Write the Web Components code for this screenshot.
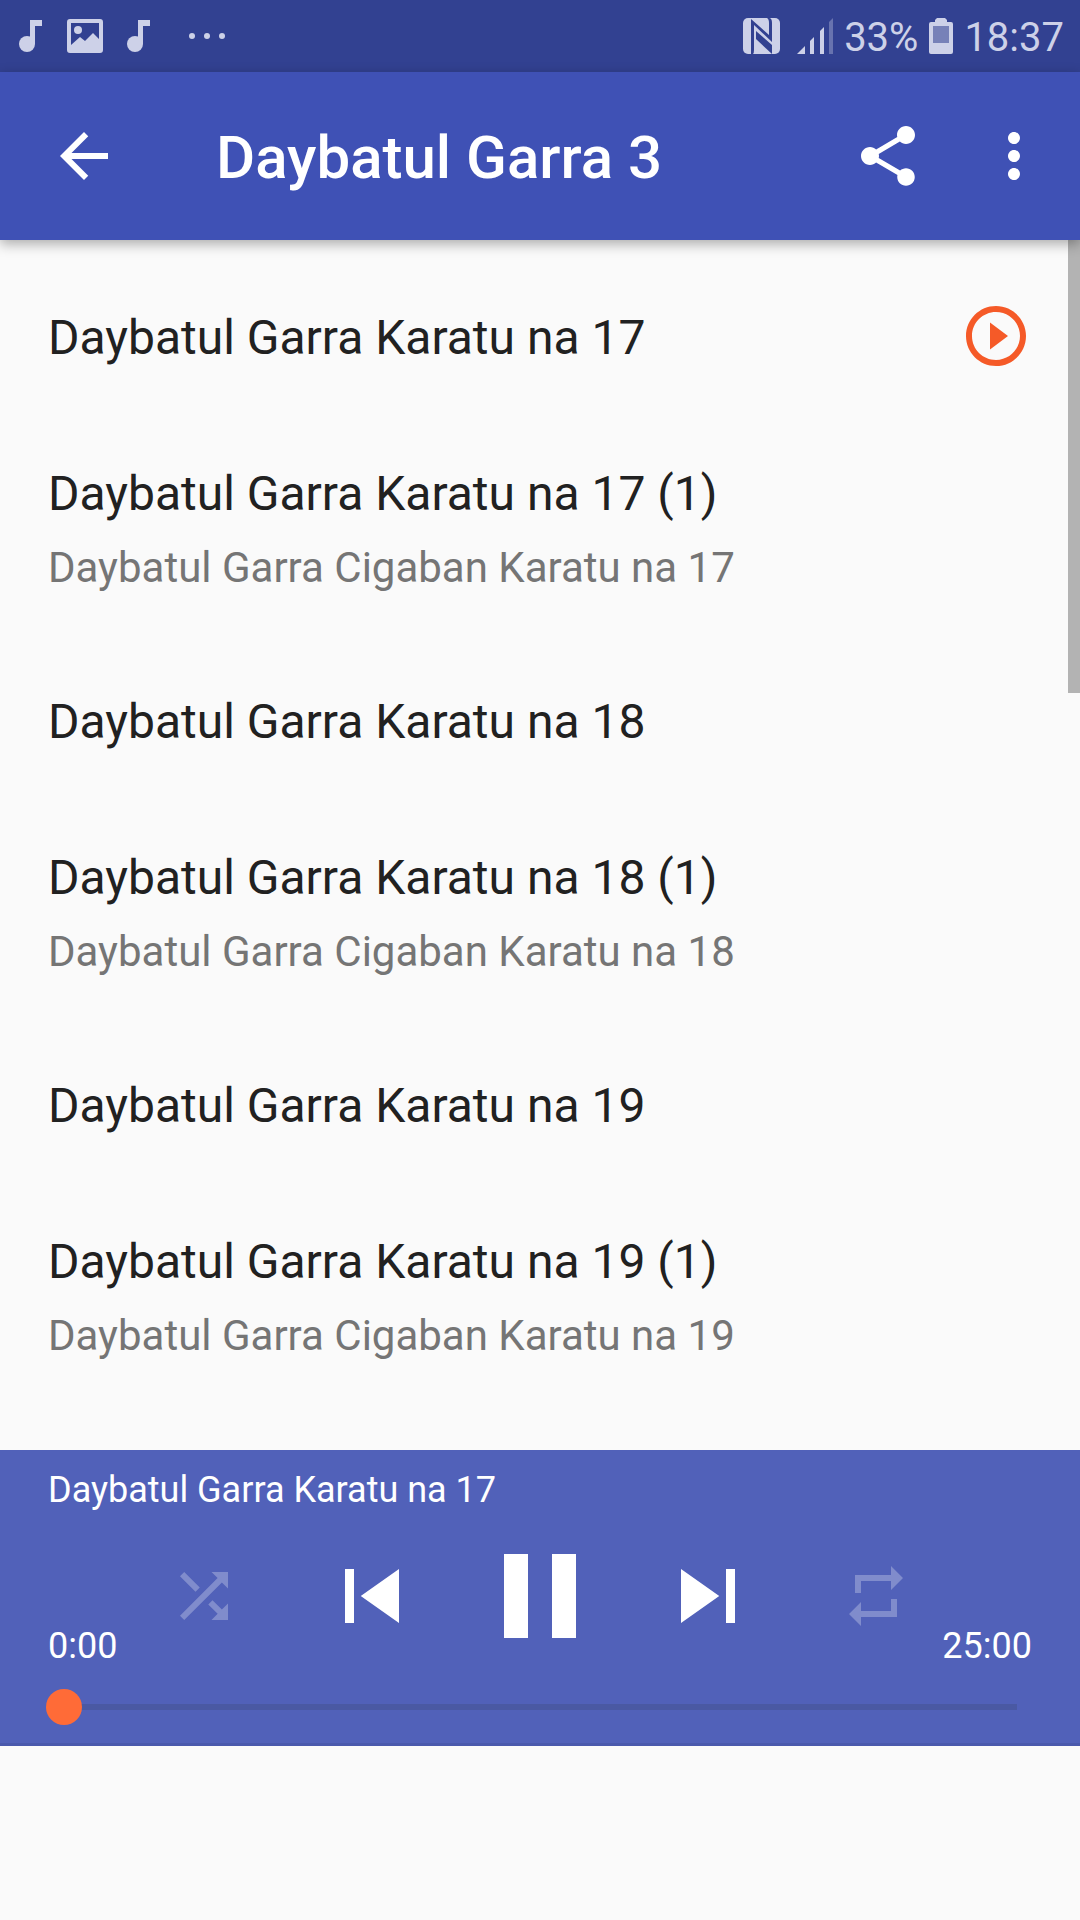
<!DOCTYPE html>
<html lang="ha">
<head>
<meta charset="utf-8">
<meta name="viewport" content="width=device-width, initial-scale=1">
<title>Daybatul Garra 3</title>
<style>
  html, body { height: 100%; }
  body {
    margin: 0;
    background: #fafafa;
    font-family: Roboto, "Liberation Sans", sans-serif;
  }
</style>
</head>
<body>
<audio-app>
  <status-bar slot="status" battery="33%" time="18:37"></status-bar>
  <app-bar slot="header">Daybatul Garra 3</app-bar>
  <track-list>
    <track-item playing>Daybatul Garra Karatu na 17</track-item>
    <track-item>Daybatul Garra Karatu na 17 (1)<span slot="sub">Daybatul Garra Cigaban Karatu na 17</span></track-item>
    <track-item>Daybatul Garra Karatu na 18</track-item>
    <track-item>Daybatul Garra Karatu na 18 (1)<span slot="sub">Daybatul Garra Cigaban Karatu na 18</span></track-item>
    <track-item>Daybatul Garra Karatu na 19</track-item>
    <track-item>Daybatul Garra Karatu na 19 (1)<span slot="sub">Daybatul Garra Cigaban Karatu na 19</span></track-item>
  </track-list>
  <audio-player slot="player" elapsed="0:00" duration="25:00">Daybatul Garra Karatu na 17</audio-player>
</audio-app>

<script>
// Icons on a 24 unit grid
const ICONS = {
  back: 'M20 11H7.83l5.59-5.59L12 4l-8 8 8 8 1.41-1.41L7.83 13H20v-2z',
  share: 'M18 16.08c-.76 0-1.44.3-1.96.77L8.91 12.7c.05-.23.09-.46.09-.7s-.04-.47-.09-.7l7.05-4.11c.54.5 1.25.81 2.04.81 1.66 0 3-1.34 3-3s-1.34-3-3-3-3 1.34-3 3c0 .24.04.47.09.7L8.04 9.81C7.5 9.31 6.79 9 6 9c-1.66 0-3 1.34-3 3s1.34 3 3 3c.79 0 1.5-.31 2.04-.81l7.12 4.16c-.05.21-.08.43-.08.65 0 1.61 1.31 2.92 2.92 2.92s2.92-1.31 2.92-2.92-1.31-2.92-2.92-2.92z',
  more: 'M12 8c1.1 0 2-.9 2-2s-.9-2-2-2-2 .9-2 2 .9 2 2 2zm0 2c-1.1 0-2 .9-2 2s.9 2 2 2 2-.9 2-2-.9-2-2-2zm0 6c-1.1 0-2 .9-2 2s.9 2 2 2 2-.9 2-2-.9-2-2-2z',
  playing: 'M10 16.5l6-4.5-6-4.5v9zM12 2C6.48 2 2 6.48 2 12s4.48 10 10 10 10-4.48 10-10S17.52 2 12 2zm0 18c-4.41 0-8-3.59-8-8s3.59-8 8-8 8 3.59 8 8-3.59 8-8 8z',
  shuffle: 'M10.59 9.17L5.41 4 4 5.41l5.17 5.17 1.42-1.41zM14.5 4l2.04 2.04L4 18.59 5.41 20 17.96 7.46 20 9.5V4h-5.5zm.33 9.41l-1.41 1.41 3.13 3.13L14.5 20H20v-5.5l-2.04 2.04-3.13-3.13z',
  prev: 'M6 6h2v12H6zm3.5 6l8.5 6V6z',
  pause: 'M6 19h4V5H6v14zm8-14v14h4V5h-4z',
  next: 'M6 18l8.5-6L6 6v12zM16 6v12h2V6h-2z',
  repeat: 'M7 7h10v3l4-4-4-4v3H5v6h2V7zm10 10H7v-3l-4 4 4 4v-3h12v-6h-2v4z',
};

const icon = name => `<svg viewBox="0 0 24 24" aria-hidden="true"><path fill="currentColor" d="${ICONS[name]}"/></svg>`;

const BUTTON_CSS = `
  button {
    display: block;
    padding: 0;
    border: 0;
    background: none;
    color: inherit;
    font: inherit;
    cursor: pointer;
  }
  svg { display: block; width: 100%; height: 100%; }
`;

class AudioApp extends HTMLElement {
  constructor() {
    super();
    this.attachShadow({ mode: 'open' }).innerHTML = `
      <style>
        :host {
          display: flex;
          flex-direction: column;
          height: 100%;
        }
        main {
          flex: 1;
          min-height: 0;
          display: flex;
        }
        /* room kept free for a banner */
        .banner { height: 174px; }
      </style>
      <slot name="status"></slot>
      <slot name="header"></slot>
      <main><slot></slot></main>
      <slot name="player"></slot>
      <div class="banner"></div>
    `;
  }
}

class StatusBar extends HTMLElement {
  constructor() {
    super();
    const note = `
      <svg width="24" height="32" viewBox="0 0 24 32" fill="currentColor" aria-hidden="true">
        <circle cx="8" cy="24" r="8"/><path d="M11 0h12v6h-7v18h-5z"/>
      </svg>`;
    this.attachShadow({ mode: 'open' }).innerHTML = `
      <style>
        :host {
          display: flex;
          align-items: center;
          justify-content: space-between;
          height: 72px;
          padding: 0 16px 0 19px;
          background: #324191;
          color: #cdd1e8;
          font-size: 40px;
          line-height: 48px;
        }
        div { display: flex; align-items: center; }
        .left { gap: 24px; }
        .right { gap: 11px; }
        .dots { margin-left: 14px; }
        .signal { margin-left: 6px; }
        span { padding-top: 3px; }
        svg { display: block; }
      </style>
      <div class="left">
        ${note}
        <svg width="36" height="34" viewBox="0 0 36 34" fill="currentColor" aria-hidden="true">
          <path fill-rule="evenodd" d="M3 0h30a3 3 0 0 1 3 3v28a3 3 0 0 1-3 3H3a3 3 0 0 1-3-3V3a3 3 0 0 1 3-3zM4 4v22l9-8 5 4 8-8 6 6V4z"/>
          <circle cx="11" cy="11" r="4"/>
        </svg>
        ${note}
        <svg class="dots" width="36" height="6" viewBox="0 0 36 6" fill="currentColor" aria-hidden="true">
          <circle cx="3" cy="3" r="3"/><circle cx="18" cy="3" r="3"/><circle cx="33" cy="3" r="3"/>
        </svg>
      </div>
      <div class="right">
        <svg width="37" height="36" viewBox="0 0 37 36" role="img" aria-label="NFC">
          <rect width="37" height="36" rx="5" fill="currentColor"/>
          <g fill="#324191">
            <path d="M8 1l18 16V5q0-4-2-5h2q3 0 3 5v19L11 7v25q0 3-1 4H8z"/>
            <path d="M13 13l16 14v9L13 21z"/>
          </g>
        </svg>
        <svg class="signal" width="36" height="36" viewBox="0 0 36 36" fill="currentColor" aria-hidden="true">
          <path d="M0 36l8-8v8zM13 23l4-4v17h-4zM23 13l4-4v27h-4z"/>
          <path opacity=".35" d="M32 4l4-4v36h-4z"/>
        </svg>
        <span id="battery"></span>
        <svg width="24" height="36" viewBox="0 0 24 36" fill="currentColor" aria-hidden="true">
          <path fill-rule="evenodd" d="M8 0h8l2 2v2h4a2 2 0 0 1 2 2v28a2 2 0 0 1-2 2H2a2 2 0 0 1-2-2V6a2 2 0 0 1 2-2h4V2zM4 8v17h16V8z"/>
          <path opacity=".45" d="M4 8h16v17H4z"/>
        </svg>
        <span id="time"></span>
      </div>
    `;
  }

  connectedCallback() {
    this.shadowRoot.getElementById('battery').textContent = this.getAttribute('battery');
    this.shadowRoot.getElementById('time').textContent = this.getAttribute('time');
  }
}

class AppBar extends HTMLElement {
  constructor() {
    super();
    this.attachShadow({ mode: 'open' }).innerHTML = `
      <style>
        ${BUTTON_CSS}
        :host {
          display: block;
          position: relative;
          z-index: 1;
          background: #3f51b5;
          color: #fff;
          box-shadow: 0 4px 12px rgba(0, 0, 0, 0.32);
        }
        header {
          display: flex;
          align-items: center;
          height: 168px;
          padding: 0 30px 0 48px;
        }
        button { width: 72px; height: 72px; }
        h1 {
          flex: 1;
          margin: 0 0 0 96px;
          padding-top: 4px;
          font-size: 60px;
          font-weight: 500;
          line-height: 70px;
        }
        .actions { display: flex; gap: 54px; }
      </style>
      <header>
        <button aria-label="Back">${icon('back')}</button>
        <h1><slot></slot></h1>
        <div class="actions">
          <button aria-label="Share">${icon('share')}</button>
          <button aria-label="More options">${icon('more')}</button>
        </div>
      </header>
    `;
  }
}

class TrackList extends HTMLElement {
  constructor() {
    super();
    this.attachShadow({ mode: 'open' }).innerHTML = `
      <style>
        :host {
          display: block;
          position: relative;
          flex: 1;
          overflow: hidden;
        }
        .list { padding-top: 20px; }
        .thumb {
          position: absolute;
          top: 0;
          right: 0;
          width: 12px;
          height: 453px;
          background: #b3b3b3;
        }
      </style>
      <div class="list" role="list"><slot></slot></div>
      <div class="thumb"></div>
    `;
  }
}

class TrackItem extends HTMLElement {
  constructor() {
    super();
    this.attachShadow({ mode: 'open' }).innerHTML = `
      <style>
        ${BUTTON_CSS}
        :host { display: block; }
        button {
          display: flex;
          align-items: center;
          justify-content: space-between;
          width: 100%;
          padding: 48px;
          text-align: left;
        }
        .title {
          display: block;
          color: #212121;
          font-size: 48px;
          line-height: 60px;
        }
        ::slotted([slot="sub"]) {
          display: block;
          margin-top: 16px;
          color: #757575;
          font-size: 42px;
          line-height: 56px;
        }
        /* icon is taller than the line, so it must not grow the row */
        .playing {
          display: none;
          width: 72px;
          height: 72px;
          margin: -10px 0 -6px;
          color: #f55a28;
        }
        :host([playing]) .playing { display: block; }
      </style>
      <button>
        <span>
          <span class="title"><slot></slot></span>
          <slot name="sub"></slot>
        </span>
        <span class="playing">${icon('playing')}</span>
      </button>
    `;
  }

  connectedCallback() {
    this.setAttribute('role', 'listitem');
  }
}

class AudioPlayer extends HTMLElement {
  constructor() {
    super();
    this.attachShadow({ mode: 'open' }).innerHTML = `
      <style>
        ${BUTTON_CSS}
        :host {
          display: block;
          padding: 19px 0 18px;
          border-bottom: 3px solid #4a59ac;
          background: #5161b9;
          color: #fff;
          font-size: 36px;
          line-height: 42px;
        }
        .name { padding: 0 48px; }
        /* times and buttons share one cell, the times sit at its bottom corners */
        .deck { display: grid; margin-top: 13px; }
        .times, .controls { grid-area: 1 / 1; }
        .times {
          display: flex;
          align-items: flex-end;
          justify-content: space-between;
          padding: 0 48px 1px;
        }
        .controls {
          display: grid;
          grid-template-columns: repeat(5, 1fr);
          place-items: center;
          margin: 0 120px;
        }
        .small { width: 72px; height: 72px; opacity: 0.27; }
        .medium { width: 108px; height: 108px; }
        .large { width: 144px; height: 144px; }

        label { display: block; margin-top: 21px; padding: 0 45px 0 46px; }
        input {
          display: block;
          width: 100%;
          height: 36px;
          margin: 0;
          appearance: none;
          -webkit-appearance: none;
          background: linear-gradient(#4a59a3, #4a59a3) center / calc(100% - 36px) 6px no-repeat;
        }
        input::-webkit-slider-thumb {
          -webkit-appearance: none;
          width: 36px;
          height: 36px;
          border-radius: 50%;
          background: #ff6b37;
        }
      </style>
      <div class="name"><slot></slot></div>
      <div class="deck">
        <div class="times">
          <span id="elapsed"></span>
          <span id="duration"></span>
        </div>
        <div class="controls">
          <button class="small" aria-label="Shuffle">${icon('shuffle')}</button>
          <button class="medium" aria-label="Previous">${icon('prev')}</button>
          <button class="large" aria-label="Pause">${icon('pause')}</button>
          <button class="medium" aria-label="Next">${icon('next')}</button>
          <button class="small" aria-label="Repeat">${icon('repeat')}</button>
        </div>
      </div>
      <label><input type="range" min="0" max="1500" value="0" aria-label="Position"></label>
    `;
  }

  connectedCallback() {
    this.shadowRoot.getElementById('elapsed').textContent = this.getAttribute('elapsed');
    this.shadowRoot.getElementById('duration').textContent = this.getAttribute('duration');
  }
}

customElements.define('audio-app', AudioApp);
customElements.define('status-bar', StatusBar);
customElements.define('app-bar', AppBar);
customElements.define('track-list', TrackList);
customElements.define('track-item', TrackItem);
customElements.define('audio-player', AudioPlayer);
</script>
</body>
</html>
